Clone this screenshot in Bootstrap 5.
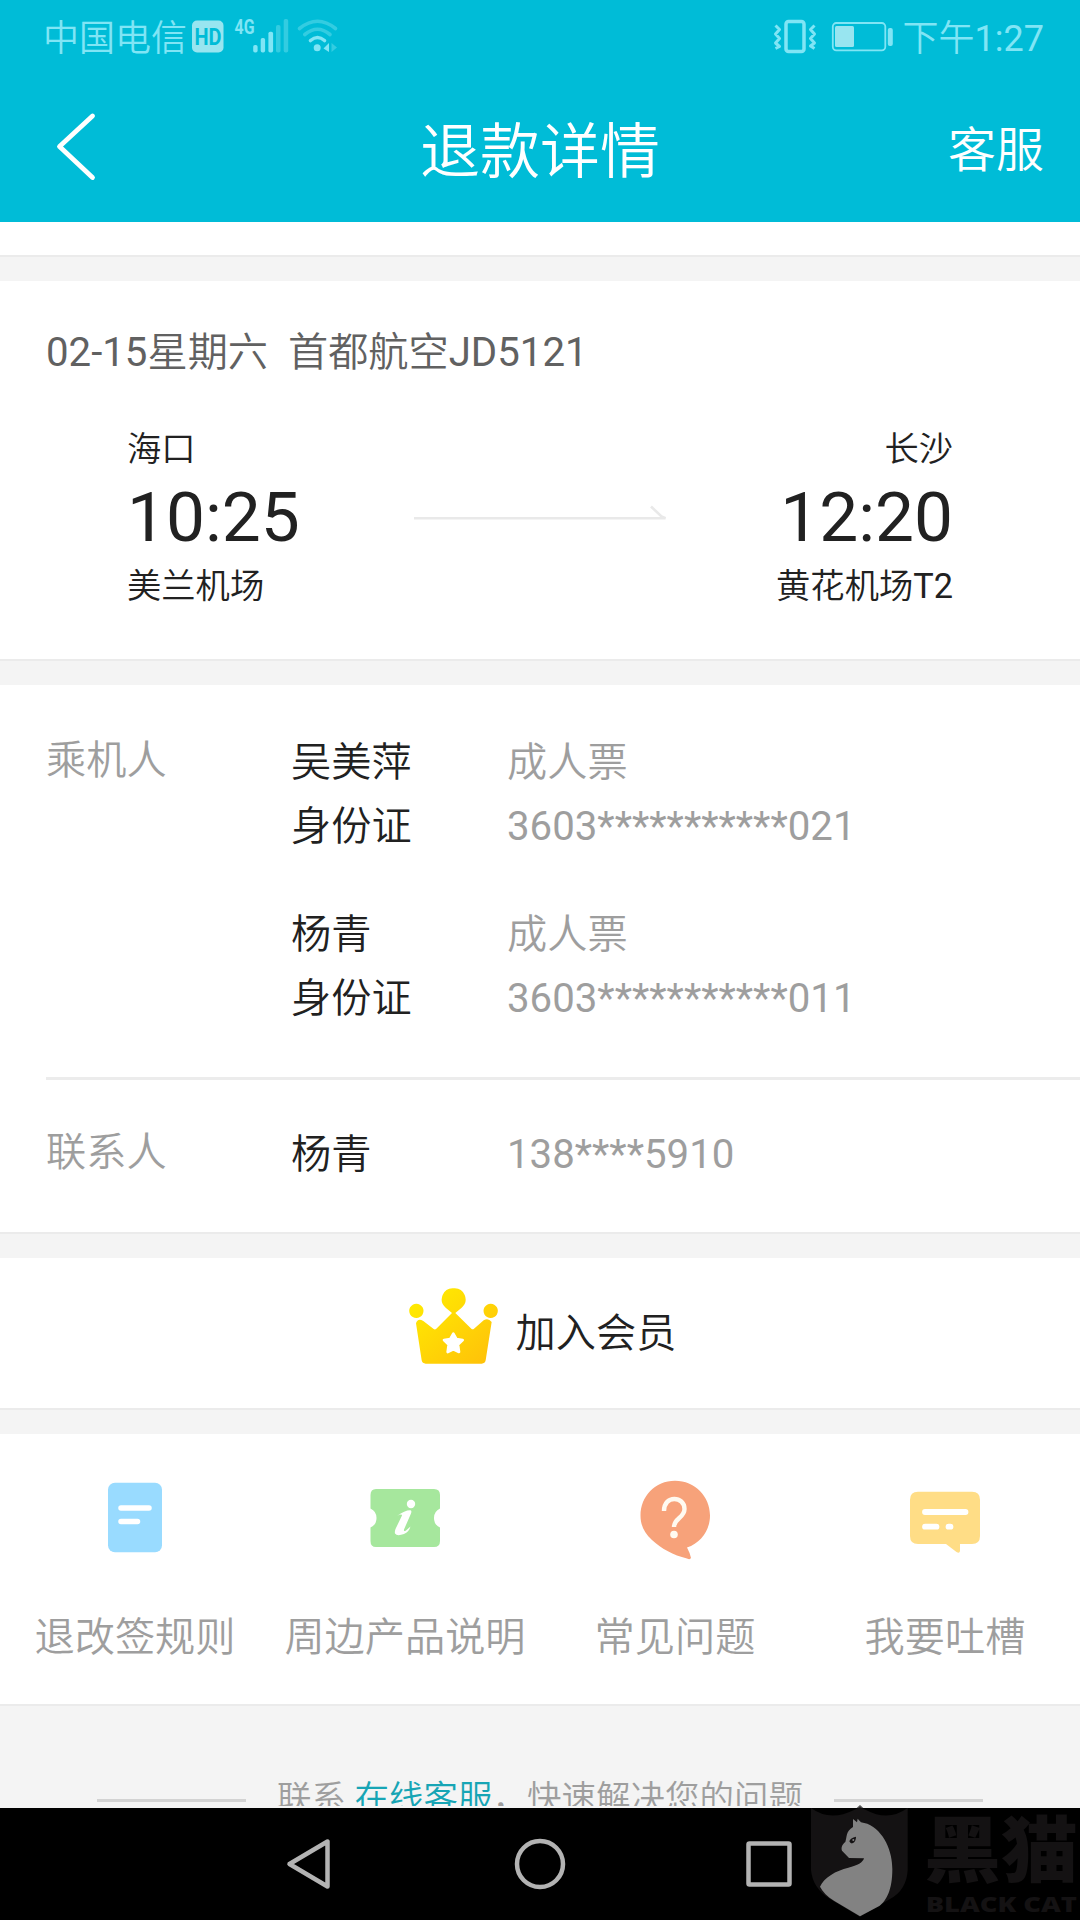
<!DOCTYPE html>
<html lang="zh-CN">
<head>
<meta charset="utf-8">
<meta name="viewport" content="width=device-width, initial-scale=1">
<title>退款详情</title>
<link href="https://cdn.jsdelivr.net/npm/bootstrap@5.3.0/dist/css/bootstrap.min.css" rel="stylesheet">
<style>
body{width:1080px;height:1920px;overflow:hidden;background:#f4f4f4;color:#212121;font-family:Roboto,"Noto Sans CJK SC DemiLight","Noto Sans CJK SC",sans-serif;font-size:40.2px;line-height:64px}
svg{display:block;flex:none}
.app-head{height:222px;background:#00bcd7}
.status-row{height:76px;padding:0 36px 0 43px;font-size:36px;line-height:76px;color:#80e5f5}
.status-row span{padding-top:1px}
.title-row{height:146px;padding:4px 36px 0 56px}
.side-slot{width:150px}
.title-row .side-slot:first-child{width:130px;padding-bottom:11px}
.title-row h1{font-size:60px;line-height:72px;font-weight:400;padding-top:3px}
.help-link{font-size:48px;line-height:70px}
.peek{height:33px}
.block-gap{height:26px;border-top:2px solid #ebebeb;background:#f4f4f4}
.flight{height:378px;padding-top:40px}
.flight-no{padding-left:46px;color:#616161}
.route{padding:34px 127px 0}
.place{font-size:34.3px;line-height:60px}
.clock{font-size:69.4px;line-height:76px;padding-top:1px}
.route svg{margin-bottom:11px}
.people{height:547px;padding:46px 0 0 46px}
.tag{width:245px;color:#9e9e9e;margin-top:-2px}
.who{width:216px}
.soft{color:#9e9e9e}
.people .second{margin-top:44px}
.rule{height:3px;background:#ececec;margin-top:46px}
.contact{padding-top:43px}
.member{height:150px;gap:17px;padding:1px 0 0 5px}
.member svg{margin-bottom:14px}
.actions{height:270px;padding-top:40px}
.actions .lbl{margin-top:42px;color:#9e9e9e;white-space:nowrap}
.foot{height:102px;border-top:2px solid #ebebeb;padding-top:69px;gap:31px;font-size:34.5px;line-height:46px;color:#9e9e9e}
.foot i{width:149px;height:3px;background:#d3d3d3;margin-top:24px}
.foot a{color:#17a5b5}
.keys{height:112px;background:#000}
.brand{left:811px;top:1803px}
</style>
</head>
<body class="position-relative d-flex flex-column">
<header class="app-head text-white flex-shrink-0">
  <div class="status-row d-flex justify-content-between">
    <div class="d-flex">
      <span>中国电信</span>
      <svg width="160" height="76" viewBox="187 0 160 76">
        <rect x="192" y="20.5" width="31.5" height="32" rx="5" fill="#98e5f0"/>
        <text x="194.5" y="44.5" font-family="Roboto" font-weight="700" font-size="23" textLength="27" lengthAdjust="spacingAndGlyphs" fill="#00bcd7">HD</text>
        <text x="234.500" y="34.200" font-family="Roboto" font-weight="700" font-size="20.500" textLength="20" lengthAdjust="spacingAndGlyphs" fill="#80e5f5">4G</text>
        <g fill="#80e5f5"><rect x="253.200" y="45" width="4.400" height="7.500" rx="1.800"/><rect x="260.700" y="38" width="4.400" height="14.500" rx="1.800"/><rect x="268.400" y="31.700" width="4.700" height="20.800" rx="1.800"/></g>
        <g fill="#33cce1"><rect x="276" y="25" width="4.500" height="27.500" rx="1.800"/><rect x="283.700" y="19" width="4.500" height="33.500" rx="1.800"/></g>
        <g fill="none" stroke-linecap="round" stroke-width="3.600"><path d="M299.500 28.500Q317.500 14 335.500 28.500M304.800 34.500Q317.500 24 330 34.500" stroke="#33cce1"/><path d="M310.500 40.500Q317.500 34.500 324.500 40.500" stroke="#80e5f5"/></g>
        <circle cx="317.200" cy="47.700" r="3.500" fill="#80e5f5"/><path d="M329 43V52L323.500 48.500Z" fill="#80e5f5"/><path d="M331.500 43V52L337 47.500Z" fill="#33cce1"/>
      </svg>
    </div>
    <div class="d-flex">
      <svg width="135" height="76" viewBox="768 0 135 76">
        <rect x="786" y="21.500" width="18" height="30" rx="2.500" fill="none" stroke="#80e5f5" stroke-width="3.500"/>
        <path d="M775.500 25.500L779.500 29.500L775.500 34L779.500 38.500L775.500 43L779.500 46.500L775.500 48.500M814.500 25.500L810.500 29.500L814.500 34L810.500 38.500L814.500 43L810.500 46L814.500 48.500" fill="none" stroke="#80e5f5" stroke-width="3" stroke-linejoin="round"/>
        <rect x="832.800" y="23" width="52.500" height="27.300" rx="3.500" fill="none" stroke="#80e5f5" stroke-width="1.800"/>
        <rect x="835" y="26" width="19" height="21" rx="1.500" fill="#98e5f0"/><rect x="887.800" y="28" width="5" height="18" rx="2" fill="#80e5f5"/>
      </svg>
      <span>下午1:27</span>
    </div>
  </div>
  <div class="title-row d-flex align-items-center justify-content-between">
    <div class="side-slot"><svg width="44" height="70" viewBox="56 111 44 70"><path d="M92.500 116L59.500 146.500L92.500 177.500" fill="none" stroke="#fff" stroke-width="4.800" stroke-linecap="round" stroke-linejoin="round"/></svg></div>
    <h1 class="m-0">退款详情</h1>
    <div class="side-slot text-end help-link">客服</div>
  </div>
</header>
<main class="flex-shrink-0">
  <div class="peek bg-white"></div>
  <div class="block-gap"></div>
  <section class="flight bg-white">
    <div class="flight-no">02-15星期六&nbsp; 首都航空JD5121</div>
    <div class="route d-flex justify-content-between align-items-center">
      <div><div class="place">海口</div><div class="clock">10:25</div><div class="place">美兰机场</div></div>
      <svg class="ms-1" width="254" height="20" viewBox="413 502 254 20"><path d="M414 518.300H665.500L661.500 516.500L651 506.500" fill="none" stroke="#e9e9e9" stroke-width="2.600"/></svg>
      <div class="text-end"><div class="place">长沙</div><div class="clock">12:20</div><div class="place">黄花机场T2</div></div>
    </div>
  </section>
  <div class="block-gap"></div>
  <section class="people bg-white">
    <div class="d-flex">
      <div class="tag">乘机人</div>
      <div>
        <div class="d-flex"><div class="who">吴美萍</div><div class="soft">成人票</div></div>
        <div class="d-flex"><div class="who">身份证</div><div class="soft">3603***********021</div></div>
        <div class="d-flex second"><div class="who">杨青</div><div class="soft">成人票</div></div>
        <div class="d-flex"><div class="who">身份证</div><div class="soft">3603***********011</div></div>
      </div>
    </div>
    <div class="rule"></div>
    <div class="contact d-flex"><div class="tag">联系人</div><div class="who">杨青</div><div class="soft">138****5910</div></div>
  </section>
  <div class="block-gap"></div>
  <section class="member bg-white d-flex align-items-center justify-content-center">
    <svg width="90" height="78" viewBox="87 144 270 234">
      <defs><linearGradient id="gold" x1="0" y1="0" x2="1" y2="1"><stop offset="0" stop-color="#fff000"/><stop offset="1" stop-color="#ffbe0a"/></linearGradient></defs>
      <path fill="url(#gold)" fill-rule="evenodd" d="M221 145A33 33 0 0 1 245 203L226 219L274 266Q278 270 282 266L311 241Q325 233 335 246L317 361Q315 371 305 371H137Q127 371 125 361L108 250Q113 233 130 243L161 267Q165 270 169 266L216 219L197 203A33 33 0 0 1 221 145ZM109 191a21.500 21.500 0 1 0 .1 0ZM332 191a21.500 21.500 0 1 0 .1 0Z"/>
      <path fill="#fff" stroke="#fff" stroke-width="8" stroke-linejoin="round" d="M220 281L229 297L248 300L234 314L237 336L220 328L203 336L206 314L192 300L211 297Z"/>
    </svg>
    <span>加入会员</span>
  </section>
  <div class="block-gap"></div>
  <section class="actions bg-white row g-0">
    <div class="col-3 d-flex flex-column align-items-center">
      <svg width="90" height="90"><rect x="18" y="8.700" width="54" height="69.500" rx="7" fill="#99dbff"/><path d="M31 34H59M31 47.500H47.500" stroke="#fff" stroke-width="5.500" stroke-linecap="round"/></svg>
      <div class="lbl">退改签规则</div>
    </div>
    <div class="col-3 d-flex flex-column align-items-center">
      <svg width="90" height="90"><path fill="#a6e79d" d="M16 15H74Q80 15 80 21V34.500A10.500 10.500 0 0 0 80 53.500V67Q80 73 74 73H16Q10.500 73 10.500 67V53.500A10.500 10.500 0 0 0 10.500 34.500V21Q10.500 15 16 15Z"/><circle cx="51" cy="30" r="4.200" fill="#fff"/><path d="M37 42Q45 36 50.500 36.200Q52 36.500 51 39.500L44 55.500Q43.500 58 46 56.500L50.500 52.500Q49 58 44 60Q37 62.500 35 59.500Q34.500 58 35.500 55L42 41.500Q42 39.500 37 42Z" fill="#fff"/></svg>
      <div class="lbl">周边产品说明</div>
    </div>
    <div class="col-3 d-flex flex-column align-items-center">
      <svg width="90" height="90"><path fill="#f7a27a" d="M45 6.700C65 6.700 80 22.500 80 41.500C80 56 71 69 57 73.500Q60 79 61 84Q60 86 57 84.500C43 81 32 75 22 66C14 58.500 10.500 51 10.500 41.500C10.500 22.500 25 6.700 45 6.700Z"/><path d="M34 37C34 20.500 54.500 22 54.500 35C54.500 44 44 44 44 53" stroke="#fffaf0" stroke-width="4.400" fill="none"/><circle cx="44" cy="60.500" r="3.800" fill="#fffaf0"/></svg>
      <div class="lbl">常见问题</div>
    </div>
    <div class="col-3 d-flex flex-column align-items-center">
      <svg width="90" height="90"><path fill="#ffdd86" d="M18 17.700H72Q80 17.700 80 25.700V62Q80 70 72 70H60V77Q59.500 80 56.500 78L46 70H18Q10 70 10 62V25.700Q10 17.700 18 17.700Z"/><path d="M25 38H65.500M25 52.700H36.500M48.500 52.700H50.500" stroke="#fff" stroke-width="5.800" stroke-linecap="round"/></svg>
      <div class="lbl">我要吐槽</div>
    </div>
  </section>
  <div class="foot d-flex justify-content-center overflow-hidden">
    <i></i><div>联系 <a class="text-decoration-none">在线客服</a>，快速解决您的问题</div><i></i>
  </div>
</main>
<nav class="keys mt-auto flex-shrink-0">
  <svg width="1080" height="112" viewBox="0 1808 1080 112" fill="none" stroke="#b3b3b3" stroke-width="4.500" stroke-linejoin="round">
    <path d="M327.500 1841.500V1886.500L289.500 1864Z"/><circle cx="540" cy="1864" r="23"/><rect x="748.500" y="1843.500" width="41" height="41" rx="1"/>
  </svg>
</nav>
<div class="brand position-absolute">
  <svg width="269" height="117" viewBox="93 39 807 351">
    <path fill="#555" d="M230 54L240 45L250 54Z"/>
    <path fill="#141213" d="M93 54Q150 96 222 60L240 52L258 60Q325 96 383 54V240Q380 300 330 327L240 380L150 327Q98 295 93 240Z"/>
    <path fill="#828282" d="M219 87L231 97L233 86L243 97L262 101C312 122 338 185 337 238C337 300 319 333 298 348L240 379L163 333C142 320 128 305 120 290C132 262 168 242 205 233C233 227 249 217 252 205L207 204L186 182C182 172 188 162 196 156C201 141 197 124 219 111Z"/>
    <path fill="#141213" d="M208 154Q211 143 228 140Q228 155 217 160Q211 161 208 154Z"/><circle cx="220" cy="150" r="3" fill="#828282"/>
    <g fill="#141213"><text x="432" y="258" font-family="Noto Sans CJK SC" font-weight="900" font-size="214" textLength="462" lengthAdjust="spacingAndGlyphs">黑猫</text>
    <text x="437" y="366" font-family="Open Sans" font-weight="800" font-size="64" textLength="454" lengthAdjust="spacingAndGlyphs">BLACK CAT</text></g>
  </svg>
</div>
<script src="https://cdn.jsdelivr.net/npm/bootstrap@5.3.0/dist/js/bootstrap.bundle.min.js"></script>
</body>
</html>
